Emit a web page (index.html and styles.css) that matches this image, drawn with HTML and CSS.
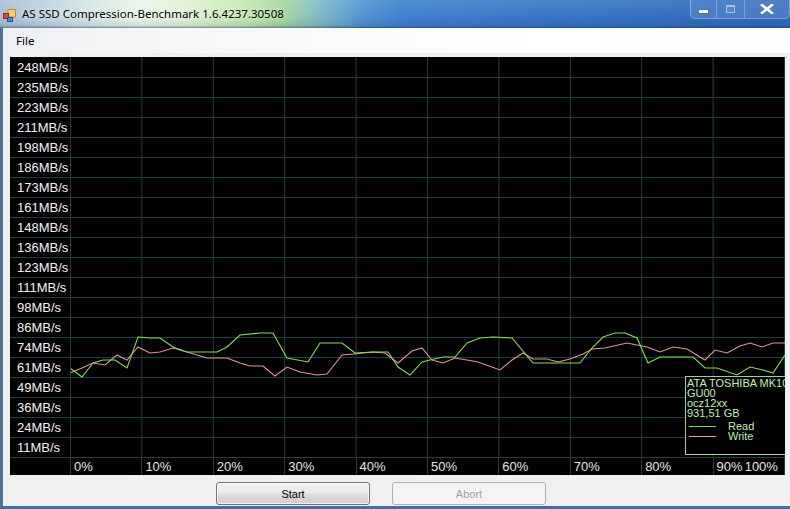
FILE: index.html
```html
<!DOCTYPE html>
<html>
<head>
<meta charset="utf-8">
<title>AS SSD Compression-Benchmark</title>
<link rel="stylesheet" href="styles.css">
</head>
<body>
<div class="window">
  <div class="titlebar">
    <svg class="appicon" width="13" height="13" viewBox="0 0 13 13">
      <rect x="5" y="0.5" width="7.5" height="7.5" fill="#f3d27a" stroke="#c98a2c"/>
      <rect x="0.5" y="4.5" width="5" height="5" fill="#e0443a" stroke="#a0221c"/>
      <rect x="4.5" y="8.5" width="5" height="4" fill="#4a84d8" stroke="#23509a"/>
    </svg>
    <span class="title">AS SSD Compression-Benchmark 1.6.4237.30508</span>
    <div class="caption">
      <div class="cbtn cmin"><span class="min-glyph"></span></div>
      <div class="cbtn cmax"><span class="max-glyph"></span></div>
      <div class="cbtn cclose">
        <svg width="14" height="10" viewBox="0 0 14 10"><path d="M2 1 L12 9 M12 1 L2 9" stroke="#ffffff" stroke-width="2.6" stroke-linecap="square"/></svg>
      </div>
    </div>
  </div>
  <div class="frame">
    <div class="menubar"><span class="menuitem">File</span></div>
    <div class="chart">
      <div class="yaxis">
        <div class="ylab">248MB/s</div>
        <div class="ylab">235MB/s</div>
        <div class="ylab">223MB/s</div>
        <div class="ylab">211MB/s</div>
        <div class="ylab">198MB/s</div>
        <div class="ylab">186MB/s</div>
        <div class="ylab">173MB/s</div>
        <div class="ylab">161MB/s</div>
        <div class="ylab">148MB/s</div>
        <div class="ylab">136MB/s</div>
        <div class="ylab">123MB/s</div>
        <div class="ylab">111MB/s</div>
        <div class="ylab">98MB/s</div>
        <div class="ylab">86MB/s</div>
        <div class="ylab">74MB/s</div>
        <div class="ylab">61MB/s</div>
        <div class="ylab">49MB/s</div>
        <div class="ylab">36MB/s</div>
        <div class="ylab">24MB/s</div>
        <div class="ylab">11MB/s</div>
      </div>
      <div class="plot">
        <svg class="plotsvg" width="714" height="401" viewBox="0 0 714 401">
          <g stroke="#213f3f" stroke-width="1">
            <line x1="0" y1="20.5" x2="714" y2="20.5"/>
            <line x1="0" y1="40.5" x2="714" y2="40.5"/>
            <line x1="0" y1="60.5" x2="714" y2="60.5"/>
            <line x1="0" y1="80.5" x2="714" y2="80.5"/>
            <line x1="0" y1="100.5" x2="714" y2="100.5"/>
            <line x1="0" y1="120.5" x2="714" y2="120.5"/>
            <line x1="0" y1="140.5" x2="714" y2="140.5"/>
            <line x1="0" y1="160.5" x2="714" y2="160.5"/>
            <line x1="0" y1="180.5" x2="714" y2="180.5"/>
            <line x1="0" y1="200.5" x2="714" y2="200.5"/>
            <line x1="0" y1="220.5" x2="714" y2="220.5"/>
            <line x1="0" y1="240.5" x2="714" y2="240.5"/>
            <line x1="0" y1="260.5" x2="714" y2="260.5"/>
            <line x1="0" y1="280.5" x2="714" y2="280.5"/>
            <line x1="0" y1="300.5" x2="714" y2="300.5"/>
            <line x1="0" y1="320.5" x2="714" y2="320.5"/>
            <line x1="0" y1="340.5" x2="714" y2="340.5"/>
            <line x1="0" y1="360.5" x2="714" y2="360.5"/>
            <line x1="0" y1="380.5" x2="714" y2="380.5"/>
            <line x1="0" y1="400.5" x2="714" y2="400.5"/>
            <line x1="70.9" y1="0" x2="70.9" y2="401"/>
            <line x1="142.3" y1="0" x2="142.3" y2="401"/>
            <line x1="213.7" y1="0" x2="213.7" y2="401"/>
            <line x1="285.1" y1="0" x2="285.1" y2="401"/>
            <line x1="356.5" y1="0" x2="356.5" y2="401"/>
            <line x1="427.9" y1="0" x2="427.9" y2="401"/>
            <line x1="499.3" y1="0" x2="499.3" y2="401"/>
            <line x1="570.7" y1="0" x2="570.7" y2="401"/>
            <line x1="642.1" y1="0" x2="642.1" y2="401"/>
            <line x1="713.5" y1="0" x2="713.5" y2="401"/>
          </g>
          <polyline fill="none" stroke="#e09494" stroke-width="1.1" points="-1,316 11,311 22,306 34,308 46,298 56,303 67,290 79,296 89,295 102,291 116,295 136,301 156,301 169,306 179,309 192,309 204,319 216,310 229,315 246,318 256,317 271,298 282,297 302,295 314,296 327,306 341,294 351,291 361,303 372,306 384,301 396,303 407,305 429,313 441,303 452,296 462,302 476,302 487,305 499,302 512,297 521,292 534,291 556,286 576,290 589,295 602,290 616,292 634,303 644,293 656,296 669,289 679,286 691,290 702,286 714,286"/>
          <polyline fill="none" stroke="#86dc50" stroke-width="1.1" points="-1,311 11,320 22,306 32,303 44,303 56,311 67,280 79,281 89,281 102,290 116,295 129,295 146,295 156,290 169,278 189,276 202,276 216,301 237,305 249,286 271,286 284,296 302,295 317,295 327,310 339,318 351,305 359,303 372,300 384,300 396,286 409,281 422,280 441,281 462,306 486,306 509,306 521,291 532,280 544,276 554,276 566,281 577,306 589,300 609,300 622,300 634,311 646,311 666,318 679,310 692,313 702,316 714,298"/>
        </svg>
        <div class="legend">
          <div class="ltext">ATA TOSHIBA MK1002TS</div>
          <div class="ltext">GU00</div>
          <div class="ltext">ocz12xx</div>
          <div class="ltext">931,51 GB</div>
          <div class="lrow lrow-first"><span class="lline lread"></span><span class="ltext">Read</span></div>
          <div class="lrow"><span class="lline lwrite"></span><span class="ltext">Write</span></div>
        </div>
      </div>
      <div class="corner"></div>
      <div class="xaxis">
        <div class="xcell">0%</div>
        <div class="xcell">10%</div>
        <div class="xcell">20%</div>
        <div class="xcell">30%</div>
        <div class="xcell">40%</div>
        <div class="xcell">50%</div>
        <div class="xcell">60%</div>
        <div class="xcell">70%</div>
        <div class="xcell">80%</div>
        <div class="xcell xlast"><span>90%</span><span>100%</span></div>
      </div>
    </div>
    <div class="buttons">
      <button class="btn btn-start">Start</button>
      <button class="btn btn-abort" disabled>Abort</button>
    </div>
  </div>
</div>
</body>
</html>
```

FILE: styles.css
```css
* { box-sizing: border-box; }
html, body { margin: 0; padding: 0; }
body {
  width: 790px;
  height: 509px;
  overflow: hidden;
  background: #f0f0f0;
  font-family: "Liberation Sans", Arial, sans-serif;
}
.window {
  width: 790px;
  height: 509px;
  display: flex;
  flex-direction: column;
}
.titlebar {
  height: 28px;
  display: flex;
  align-items: flex-start;
  background:
    linear-gradient(to bottom, rgba(255,255,255,0.10) 0%, rgba(255,255,255,0) 60%, rgba(0,20,60,0.10) 92%, rgba(20,50,90,0.55) 100%),
    linear-gradient(90deg, #a9c0d6 0px, #bcd0e0 40px, #d6e7e6 90px, #e9f5e8 140px, #dff2d4 190px, #c6eab2 240px, #a9da9c 280px, #80bac6 320px, #5395d2 360px, #3f82cd 400px, #3876c6 550px, #3069b9 790px);
}
.appicon {
  margin: 9px 0 0 3px;
  flex: none;
}
.title {
  margin: 6px 0 0 6px;
  font-family: "Noto Sans", "Open Sans", sans-serif;
  font-size: 11.5px;
  line-height: 16px;
  color: #000;
  white-space: nowrap;
  text-shadow: 0 0 6px rgba(255,255,255,0.8);
}
.caption {
  margin-left: auto;
  display: flex;
  height: 19px;
  border: 1px solid rgba(170,200,240,0.55);
  border-top: none;
  border-radius: 0 0 5px 5px;
  overflow: hidden;
  background: linear-gradient(to bottom, rgba(255,255,255,0.06), rgba(255,255,255,0.12));
}
.cbtn {
  height: 18px;
  display: flex;
  align-items: center;
  justify-content: center;
}
.cmin { width: 26px; border-right: 1px solid rgba(170,200,240,0.45); }
.cmax { width: 28px; border-right: 1px solid rgba(170,200,240,0.45); }
.cclose { width: 44px; }
.min-glyph {
  width: 9px;
  height: 3px;
  margin-top: 5px;
  background: #ffffff;
  box-shadow: 0 0 1px rgba(0,0,0,0.5);
}
.max-glyph {
  width: 9px;
  height: 8px;
  border: 1px solid #a9c3e6;
  border-top-width: 2px;
  background: #5a86c4;
}
.frame {
  flex: 1;
  display: flex;
  flex-direction: column;
  border-left: 3px solid #4e7399;
  border-bottom: 3px solid #3c6fae;
  background: #f0f0f0;
}
.menubar {
  height: 26px;
  display: flex;
  align-items: center;
  background: linear-gradient(90deg, #eef0f3 0%, #f8f9fa 30%, #ffffff 70%, #fdfdfd 100%);
  border-bottom: 1px solid #eceef1;
}
.menuitem {
  margin-left: 13px;
  font-family: "Noto Sans", "Open Sans", sans-serif;
  font-size: 11.5px;
  color: #000;
}
.chart {
  margin: 3px 0 0 7px;
  width: 775px;
  height: 418px;
  background: #000;
  display: grid;
  grid-template-columns: 61px 714px;
  grid-template-rows: 401px 17px;
  overflow: hidden;
}
.yaxis {
  padding-top: 1px;
  border-right: 1px solid #213f3f;
}
.ylab {
  height: 20px;
  border-bottom: 1px solid #213f3f;
  padding-left: 7px;
  font-size: 13px;
  line-height: 19px;
  color: #f2f2f2;
  white-space: nowrap;
}
.plot {
  position: relative;
}
.plotsvg { display: block; }
.legend {
  position: absolute;
  left: 614px;
  top: 319px;
  width: 140px;
  height: 79px;
  border: 1px solid #98d498;
  background: #000;
  padding: 1px 0 0 1px;
}
.ltext {
  font-size: 11px;
  line-height: 10px;
  height: 10px;
  color: #c2eeb4;
  white-space: nowrap;
}
.lrow {
  display: flex;
  align-items: center;
  height: 10px;
}
.lrow-first { margin-top: 3px; }
.lline {
  width: 27px;
  height: 1px;
  margin: 0 12px 0 2px;
}
.lread { background: #86dc50; }
.lwrite { background: #e0a0a0; }
.corner {
  border-right: 1px solid #213f3f;
}
.xaxis {
  display: flex;
}
.xcell {
  width: 71.4px;
  flex: none;
  border-right: 1px solid #213f3f;
  padding-left: 3px;
  font-size: 13px;
  line-height: 17px;
  color: #e4e4e4;
  white-space: nowrap;
}
.xlast {
  display: flex;
  justify-content: space-between;
  padding-right: 6px;
}
.buttons {
  flex: 1;
  display: flex;
  gap: 22px;
  padding: 7px 0 0 213px;
}
.btn {
  width: 154px;
  height: 23px;
  margin: 0;
  padding: 0;
  border-radius: 3px;
  font-family: "Liberation Sans", Arial, sans-serif;
  font-size: 11px;
}
.btn-start {
  border: 1px solid #707070;
  color: #000;
  background: linear-gradient(to bottom, #f2f2f2 0%, #ebebeb 48%, #dddddd 52%, #cfcfcf 100%);
  box-shadow: inset 0 0 0 1px rgba(255,255,255,0.7);
}
.btn-abort {
  border: 1px solid #adb2b5;
  color: #a3a3a3;
  background: #f4f4f4;
}
```
